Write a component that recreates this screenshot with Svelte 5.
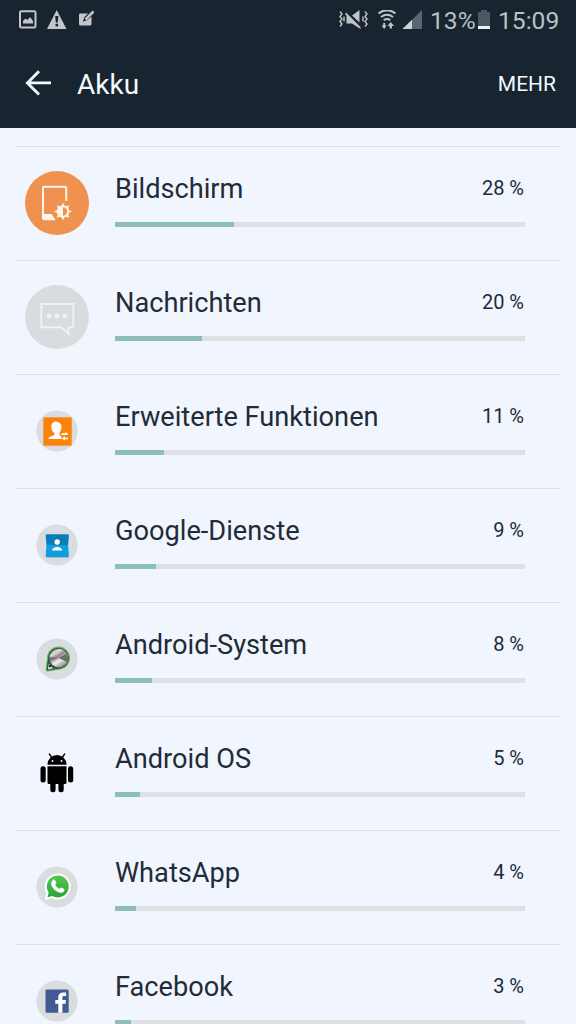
<script>
  const apps = [
    { icon: 'display', name: 'Bildschirm', percent: 28, bar: 29 },
    { icon: 'messages', name: 'Nachrichten', percent: 20, bar: 21.2 },
    { icon: 'features', name: 'Erweiterte Funktionen', percent: 11, bar: 12 },
    { icon: 'google', name: 'Google-Dienste', percent: 9, bar: 10 },
    { icon: 'system', name: 'Android-System', percent: 8, bar: 9 },
    { icon: 'android', name: 'Android OS', percent: 5, bar: 6.1 },
    { icon: 'whatsapp', name: 'WhatsApp', percent: 4, bar: 5.1 },
    { icon: 'facebook', name: 'Facebook', percent: 3, bar: 3.9 }
  ];

  const rays = [0, 45, 90, 135, 180, 225, 270, 315];
</script>

<div class="screen">
  <header>
    <div class="status-bar">
      <svg class="notifications" width="80" height="24" viewBox="0 0 80 24">
        <rect x="1" y="1.200" width="15.5" height="16.400" rx="1.3" fill="none" stroke="#c3c7ca" stroke-width="2" />
        <path d="M4 13.500v-2.500l2.500-2.500 2 1.500 2.500-3 3 4v2.500z" fill="#c3c7ca" />
        <path d="M37.700 0L47.500 19H28z" fill="#c3c7ca" />
        <path d="M36.200 6h3.200l-.6 6.500h-2z" fill="#18242f" />
        <circle cx="37.800" cy="15" r="1.500" fill="#18242f" />
        <path d="M61 3.500h8l-3.500 3.500-1.700 4.700 4.500-1.700L72.500 6.500V14q0 1.500-1.500 1.500H61.500Q60 15.500 60 14V4.500q0-1 1-1z" fill="#c3c7ca" />
        <path d="M66.500 9.500l8-8" stroke="#c3c7ca" stroke-width="2.500" />
      </svg>

      <div class="status-right">
        <svg width="90" height="24" viewBox="0 0 90 24">
          <g fill="none" stroke="#c0c4c7" stroke-width="1.400">
            <path d="M2 1.500l2 2.500-2 2.500 2 2.500-2 2.500 2 2.500-2 2.500M27 1.500l2 2.500-2 2.500 2 2.500-2 2.500 2 2.500-2 2.500" />
            <path d="M6 6.500v5M25 6.500v5" />
          </g>
          <path d="M8 2.500L22.500 17v2L14 13.500H8.500V5.500L7 4z" fill="#c0c4c7" />
          <path d="M14 5.500L21.500 0v12.500z" fill="#c0c4c7" />
          <g fill="none" stroke="#c0c4c7" stroke-width="2">
            <path d="M40.500 3.500q8.500-6.500 17 0" />
            <path d="M43 7q6-4.500 12 0" />
            <path d="M45.700 10.200q3.300-2.400 6.600 0" />
          </g>
          <path d="M43.500 15.500h1.700V13h2v2.500h1.500L46.200 19zM49.500 16l3.200-4 3.300 4h-2.100v2.500h-2.200V16z" fill="#c0c4c7" />
          <path d="M84 0v19H64.500z" fill="#596570" />
          <path d="M74 9.700V19h-9.500z" fill="#cdd1d4" />
        </svg>
        <span class="charge">13%</span>
        <svg class="battery" width="12" height="20" viewBox="0 0 12 20">
          <path d="M3 0h6v2h3v17H0V2h3z" fill="#4b5864" />
          <path d="M0 16h12v3H0z" fill="#edf2f5" />
        </svg>
        <span class="clock">15:09</span>
      </div>
    </div>

    <div class="title-bar">
      <svg width="28" height="26" viewBox="0 0 28 26">
        <path d="M15 1.200L3.400 12.900 15 24.600M3.800 12.900H27" fill="none" stroke="#f4f9fd" stroke-width="2.900" />
      </svg>
      <h1>Akku</h1>
      <span class="more">MEHR</span>
    </div>
  </header>

  <ul class="app-list">
    {#each apps as app}
      <li>
        <svg class="app-icon" width="64" height="64" viewBox="0 0 64 64">
          {#if app.icon === 'display'}
            <circle cx="32" cy="32" r="32" fill="#ef924f" />
            <path d="M41.200 30V17q0-1.200-1.200-1.200H19.200q-1.200 0-1.200 1.200v30q0 1.200 1.200 1.200H30" fill="none" stroke="#fff5ec" stroke-width="2" />
            <path d="M17.500 43h9l4 6H19q-1.500 0-1.500-1.500z" fill="#fff5ec" />
            {#each rays as angle}
              <path d="M36.500 35L38 31.500l1.500 3.500z" fill="#fff5ec" transform="rotate({angle} 38 40.500)" />
            {/each}
            <circle cx="38" cy="40.500" r="5.200" fill="#ef924f" stroke="#fff5ec" stroke-width="2" />
            <path d="M38 36a4.500 4.500 0 0 0 0 9z" fill="#fff5ec" />
          {:else if app.icon === 'messages'}
            <circle cx="32" cy="32" r="32" fill="#d9dcdf" />
            <path d="M16.300 19h32v23.300h-4.800V49l-7-6.700H16.300z" fill="none" stroke="#f0f3f5" stroke-width="1.800" />
            <g fill="#f0f3f5">
              <circle cx="24" cy="30.700" r="2.300" />
              <circle cx="32" cy="30.700" r="2.300" />
              <circle cx="40" cy="30.700" r="2.300" />
            </g>
          {:else if app.icon === 'android'}
            <path d="M22.500 23.700a9.500 9.800 0 0 1 19 0z" />
            <path d="M26.500 16l-2.200-3M37.500 16l2.200-3" stroke="#000" stroke-width="1.300" stroke-linecap="round" />
            <circle cx="27.500" cy="20" r="1" fill="#eef2f8" />
            <circle cx="36.500" cy="20" r="1" fill="#eef2f8" />
            <path d="M22.500 25.200h19v16.300q0 1.500-1.500 1.500H24q-1.500 0-1.500-1.500z" />
            <rect x="15.500" y="25.200" width="5.200" height="16.300" rx="2.500" />
            <rect x="43" y="25.200" width="5.200" height="16.300" rx="2.500" />
            <rect x="25.300" y="38" width="5.300" height="13.300" rx="2.300" />
            <rect x="33.400" y="38" width="5.300" height="13.300" rx="2.300" />
          {:else}
            <circle cx="32" cy="32" r="20.600" fill="#dadddf" />
            {#if app.icon === 'features'}
              <path d="M18.300 18.300h28.400v28.400H18.300z" fill="#fb830c" />
              <path d="M31.500 23c3.500 0 5.200 2.500 5 5.500-.1 2.500-1.200 4-2 5.200v2.500l2 1.200v2.600H23.300q.2-1.800 2-2.300l4-1.400v-2.200c-2-1.500-3-3.500-3-6 0-3.500 2-5.500 5.200-5.500z" fill="#fff" />
              <path d="M35 33h11v8.500h-9.500v-4z" fill="#fb830c" />
              <path d="M36.500 34.200h4V33l2.500 1.800v1.300h-6.500zM43 38.800h-3v-1.500l-3.500 2.300 3.500 2v-1.300h3z" fill="#fff" />
            {:else if app.icon === 'google'}
              <path d="M21 43.500h22.500v1.600H22q-1 0-1-1.600z" fill="#a9b8c2" />
              <path d="M21.500 21.300h21.300q1.300 0 1.100 1.500l-.8 9.200H21.500l-.8-9.200q-.2-1.500.8-1.500z" fill="#087db8" />
              <path d="M21.500 32h21.600l.8 10.500q.1 1.500-1.200 1.500h-21q-1.200 0-1-1.500z" fill="#0f9fdf" />
              <circle cx="32.200" cy="29" r="2.700" fill="#fff" />
              <path d="M27.200 37.500c0-4.700 10-4.700 10 0z" fill="#fff" />
            {:else if app.icon === 'system'}
              <defs>
                <linearGradient id="metal" x1="0" y1="0" x2=".6" y2="1">
                  <stop offset="0" stop-color="#6f7573" />
                  <stop offset=".3" stop-color="#e2dcdf" />
                  <stop offset=".5" stop-color="#8d8584" />
                  <stop offset=".7" stop-color="#f9f1f5" />
                  <stop offset="1" stop-color="#8c9290" />
                </linearGradient>
              </defs>
              <path d="M22.800 28.500A11 11 0 1 1 36 41.800L23 44q-2 .2-1.800-2z" fill="#35553f" stroke="#58bd5a" stroke-width="1.100" />
              <circle cx="33.800" cy="31" r="9.300" fill="url(#metal)" />
              <path d="M33.500 31l8.600-4.500q1.700 4.500.2 8.500z" fill="#3b3d3b" opacity=".7" />
              <path d="M33.500 31l-8.700 2-.1-3z" fill="#5e5857" opacity=".7" />
              <path d="M23 42.500l.8-6 4.200 5z" fill="#d8dddc" />
              <circle cx="25" cy="39" r="1.200" fill="#252a29" />
            {:else if app.icon === 'whatsapp'}
              <defs>
                <linearGradient id="bubble" x1="0" y1="0" x2="0" y2="1">
                  <stop offset="0" stop-color="#5ac553" />
                  <stop offset="1" stop-color="#27a53a" />
                </linearGradient>
              </defs>
              <path d="M19.800 44.900l1.500-7A13 13 0 1 1 26.500 43z" fill="#fff" />
              <path d="M22.500 42.200l1.200-4.600A11 11 0 1 1 27.400 41z" fill="url(#bubble)" />
              <path d="M28 25.200c.8-.8 1.700-.6 2 .2l1 2.500c.2.800-.7 1.300-1.100 1.900 1 2 2.500 3.400 4.500 4.300.7-.6 1.200-1.700 2-1.300l2.500 1.300c.7.4.3 1.700-.3 2.400-1.500 1.600-4 1-6.200-.1-3-1.500-5.100-4-5.800-6.500-.5-1.900.1-3.500 1.400-4.700z" fill="#fff" stroke="#fff" stroke-width=".5" />
            {:else}
              <rect x="20.500" y="20.500" width="23.200" height="23.300" rx="1.500" fill="#405b96" />
              <path d="M33.300 43.800v-9h-3V31h3v-2.800c0-3.200 2-4.700 4.800-4.700h3v3.600h-2c-1.300 0-1.700.6-1.700 1.700V31h3.600l-.5 3.800h-3.100v9z" fill="#fff" />
            {/if}
          {/if}
        </svg>

        <div class="usage">
          <div class="labels">
            <h2>{app.name}</h2>
            <span>{app.percent} %</span>
          </div>
          <div class="track">
            <div class="fill" style="width: {app.bar}%"></div>
          </div>
        </div>
      </li>
    {/each}
  </ul>
</div>

<style>
  :global(body) {
    margin: 0;
    overflow: hidden;
  }

  .screen {
    height: 1024px;
    overflow: hidden;
    background: #f1f5fd;
    font-family: Roboto, sans-serif;
    color: #222b38;
  }

  header {
    height: 128px;
    background: #18242f;
  }

  svg {
    display: block;
    flex-shrink: 0;
  }

  /* Status bar */
  .status-bar {
    height: 40px;
    display: flex;
    justify-content: space-between;
    padding: 0 17px 0 19px;
    box-sizing: border-box;
    color: #bac0c5;
    font-size: 24.600px;
    line-height: 41px;
  }

  .notifications {
    margin-top: 10px;
  }

  .status-right {
    display: flex;
  }

  .status-right svg {
    margin-top: 10px;
  }

  .charge {
    width: 45px;
    margin-left: 2px;
    white-space: nowrap;
  }

  .status-right .battery {
    margin-left: 3px;
  }

  .clock {
    width: 61px;
    margin-left: 8px;
    white-space: nowrap;
  }

  /* Title bar */
  .title-bar {
    height: 88px;
    display: flex;
    align-items: center;
    padding: 0 20px 0 24px;
    color: #f4f9fd;
  }

  .title-bar svg {
    margin-bottom: 2px;
  }

  h1 {
    margin: 0 auto 0 25px;
    font-size: 28px;
    font-weight: 400;
  }

  .more {
    font-size: 21px;
  }

  /* Battery usage list */
  .app-list {
    list-style: none;
    margin: 0;
    padding: 18px 16px 0;
  }

  .app-list li {
    height: 114px;
    display: flex;
    padding: 24px 35px 0 9px;
    box-sizing: border-box;
    border-top: 1px solid #dcdfe8;
  }

  .usage {
    width: 410px;
    margin-left: 26px;
  }

  .labels {
    display: flex;
    justify-content: space-between;
    height: 51px;
    line-height: 36px;
  }

  h2 {
    margin: 0;
    font-size: 27.200px;
    font-weight: 400;
  }

  .labels span {
    margin-right: 1px;
    font-size: 20px;
    line-height: 34px;
  }

  .track {
    height: 5px;
    background: #dfe0e1;
  }

  .fill {
    height: 100%;
    background: #8dbfba;
  }
</style>
